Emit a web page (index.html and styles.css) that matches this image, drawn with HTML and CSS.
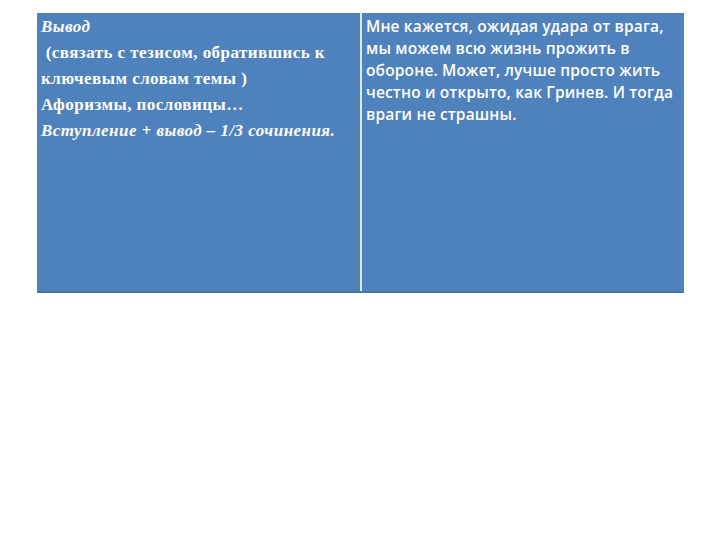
FILE: index.html
```html
<!DOCTYPE html>
<html>
<head>
<meta charset="utf-8">
<link rel="stylesheet" href="styles.css">
</head>
<body>
<div class="table">
  <div class="cell left">
    <div class="line it">Вывод</div>
    <div class="line">&nbsp;(связать с тезисом, обратившись к</div>
    <div class="line">ключевым словам темы )</div>
    <div class="line">Афоризмы, пословицы…</div>
    <div class="line it">Вступление + вывод – 1/3 сочинения.</div>
  </div>
  <div class="divider"></div>
  <div class="cell right">
    <p>Мне кажется, ожидая удара от врага,<br>мы можем всю жизнь прожить в<br>обороне. Может, лучше просто жить<br>честно и открыто, как Гринев. И тогда<br>враги не страшны.</p>
  </div>
</div>
</body>
</html>
```
FILE: styles.css
```css
html, body {
  margin: 0;
  padding: 0;
  background: #ffffff;
}
body {
  padding: 13px 0 0 37px;
}
.table {
  display: flex;
  width: 647px;
  height: 280px;
  background: #4f81bd;
  border-bottom: 2px solid #4a75a8;
  box-sizing: border-box;
}
.cell {
  color: #ffffff;
}
.left {
  width: 323px;
  padding: 1px 0 0 4px;
  box-sizing: border-box;
  font-family: "Liberation Serif", "Times New Roman", serif;
  font-weight: bold;
  font-size: 17px;
  letter-spacing: 0.45px;
  line-height: 26px;
  white-space: nowrap;
}
.it {
  font-style: italic;
}
.divider {
  width: 2px;
  background: #dfe8f3;
}
.right {
  flex: 1;
  min-width: 0;
  padding: 2px 0 0 4px;
  font-family: "Open Sans", sans-serif;
  font-weight: 600;
  font-size: 15.5px;
  letter-spacing: 0.15px;
  line-height: 22px;
  white-space: nowrap;
}
.right p {
  margin: 0;
}
```
